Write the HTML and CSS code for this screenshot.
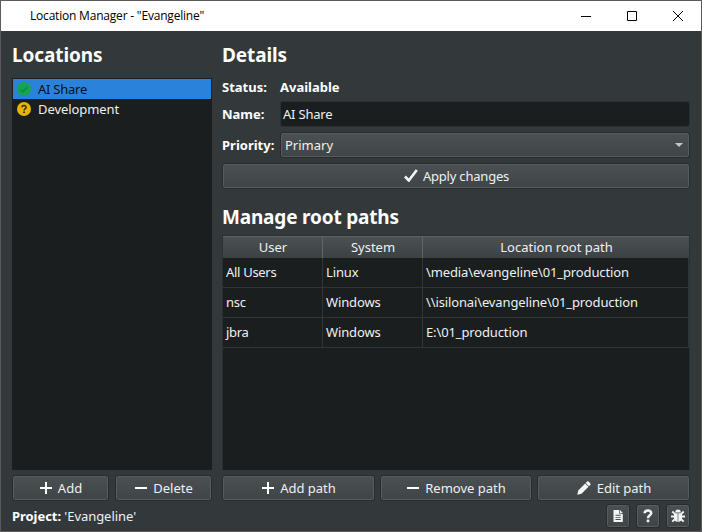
FILE: index.html
```html
<!DOCTYPE html>
<html lang="en">
<head>
<meta charset="utf-8">
<title>Location Manager</title>
<link rel="stylesheet" href="styles.css">
</head>
<body>
<div class="window">
  <header class="titlebar">
    <span class="title">Location Manager - "Evangeline"</span>
    <div class="controls">
      <svg viewBox="0 0 10 10"><path d="M0 5.5h10"/></svg>
      <svg viewBox="0 0 10 10"><path d="M.5.5h9v9h-9z"/></svg>
      <svg viewBox="0 0 10 10"><path d="M0 0l10 10M10 0L0 10"/></svg>
    </div>
  </header>
  <main class="content">
    <section class="locations">
      <h2>Locations</h2>
      <ul class="list">
        <li class="selected">
          <svg viewBox="0 0 14 14"><circle cx="7" cy="7" r="7" fill="#14a552"/><path d="M3.6 7.4l2.3 2.3 4.4-4.6" fill="none" stroke="#118a45" stroke-width="1.6"/></svg>
          <span>AI Share</span>
        </li>
        <li>
          <svg viewBox="0 0 14 14"><circle cx="7" cy="7" r="7" fill="#e6b400"/><path d="M5 5.3C5.100 2.800 9.200 2.900 9.100 5.400 9.100 6.800 7.100 6.700 7.100 8.400" fill="none" stroke="#2b2713" stroke-width="1.500"/><path d="M6.200 9.400h1.700v1.600H6.200z" fill="#2b2713"/></svg>
          <span>Development</span>
        </li>
      </ul>
      <div class="buttons">
        <button><svg class="icon" viewBox="0 0 12 12"><path d="M6 0v12M0 6h12"/></svg><span>Add</span></button>
        <button><svg class="icon" viewBox="0 0 12 12"><path d="M0 6h12"/></svg><span>Delete</span></button>
      </div>
    </section>
    <section class="details">
      <h2>Details</h2>
      <div class="form">
        <b class="status">Status:</b><b class="status">Available</b>
        <b>Name:</b><div class="input">AI Share</div>
        <b>Priority:</b><div class="select"><span>Primary</span><i class="arrow"></i></div>
      </div>
      <button class="apply"><svg class="check" viewBox="0 0 14 13"><path d="M1 7.500l3.800 4L12.800 1"/></svg><span>Apply changes</span></button>
      <h2 class="manage">Manage root paths</h2>
      <div class="table">
        <div class="row head"><span>User</span><span>System</span><span>Location root path</span></div>
        <div class="row"><span>All Users</span><span>Linux</span><span>\media\evangeline\01_production</span></div>
        <div class="row"><span>nsc</span><span>Windows</span><span>\\isilonai\evangeline\01_production</span></div>
        <div class="row"><span>jbra</span><span>Windows</span><span>E:\01_production</span></div>
      </div>
      <div class="buttons paths">
        <button><svg class="icon" viewBox="0 0 12 12"><path d="M6 0v12M0 6h12"/></svg><span>Add path</span></button>
        <button><svg class="icon" viewBox="0 0 12 12"><path d="M0 6h12"/></svg><span>Remove path</span></button>
        <button><svg class="pencil" viewBox="0 0 14 14"><path d="M.3 13.700l.9-4.200 7-7 3.300 3.300-7 7zM8.700 2L10.200.6q.7-.6 1.400 0l1.800 1.800q.6.7 0 1.400L12 5.300z"/></svg><span>Edit path</span></button>
      </div>
    </section>
  </main>
  <footer class="statusbar">
    <p><b>Project:</b> 'Evangeline'</p>
    <div class="tools">
      <button><svg viewBox="0 0 14 14"><path fill-rule="evenodd" d="M2.500 1h5.800v3.700h3.500V13H2.500zM9 1l2.800 2.900H9zM4.500 5.800v.9h5.200v-.9zM4.500 7.900v.9h5.200v-.9zM4.500 10v.9h5.200V10z"/></svg></button>
      <button><svg viewBox="0 0 14 14"><path d="M3.600 4.300C3.800.4 10.400.6 10.200 4.200 10.100 6.400 7 6.300 7 9.200" fill="none" stroke="#f4f4f4" stroke-width="2.500"/><path d="M5.700 10.600h2.600v2.600H5.700z"/></svg></button>
      <button><svg viewBox="0 0 14 14"><path d="M4.200 3.500a2.800 3 0 0 1 5.600 0zM3 4.200h3.700v8.800Q3 12.600 3 9zM7.300 4.200H11V9q0 3.600-3.700 4z"/><path d="M1.300 2.500L4 5.200M12.700 2.500L10 5.200M0 7.500h3.500M14 7.500h-3.500M1.300 12.600L4 10M12.700 12.600L10 10" stroke="#f4f4f4" stroke-width="1.800"/></svg></button>
    </div>
  </footer>
</div>
</body>
</html>
```
FILE: styles.css
```css
* { box-sizing: border-box; }

body {
  margin: 0;
  font: 13px/18px "Noto Sans", sans-serif;
  color: #eff0f1;
}

.window {
  width: 702px;
  height: 532px;
  border: 1px solid #5b5a5c;
  background: #33393b;
  display: flex;
  flex-direction: column;
}

.titlebar {
  height: 30px;
  padding: 0 18px 0 29px;
  display: flex;
  justify-content: space-between;
  align-items: center;
  background: #fff;
  color: #000;
}

.title { font: 12px/28px "Open Sans", sans-serif; letter-spacing: -0.2px; }
.controls { display: flex; gap: 36px; }
.controls svg { width: 10px; height: 10px; fill: none; stroke: #000; overflow: visible; }

.content {
  height: 470px;
  padding: 0 11px;
  display: grid;
  grid-template-columns: 200px 468px;
  column-gap: 10px;
}

.locations, .details { display: flex; flex-direction: column; }

h2 {
  height: 47px;
  margin: 0;
  padding-top: 11px;
  font-size: 19px;
  line-height: 26px;
  font-weight: 700;
  letter-spacing: -0.1px;
  color: #fff;
  white-space: nowrap;
}

.details .manage { letter-spacing: -0.18px; }

b { color: #fff; }

.list {
  height: 392px;
  margin: 0;
  padding: 1px;
  list-style: none;
  background: #1a1e1f;
  letter-spacing: -0.08px;
}

.list li { height: 20px; padding-left: 4px; display: flex; align-items: center; gap: 7px; }
.list svg { width: 14px; height: 14px; }
.list .selected { background: #2a82da; color: #03101f; letter-spacing: -0.25px; }

.buttons { display: grid; grid-auto-flow: column; grid-auto-columns: 1fr; gap: 6px; margin-top: 5px; }

button {
  height: 26px;
  padding: 0 0 1px;
  font: inherit;
  color: inherit;
  display: flex;
  align-items: center;
  justify-content: center;
  gap: 6px;
  background: linear-gradient(#4b5153, #3f4547);
  border: 1px solid #272c2e;
  border-radius: 3px;
  box-shadow: inset 0 0 0 1px #575d5f;
}

.buttons button { padding-left: 1px; }
.buttons.paths { grid-template-columns: 153px 152px 153px; gap: 5px; }

.icon { width: 12px; height: 12px; fill: none; stroke: #fff; stroke-width: 2; }
.check { width: 14px; height: 13px; fill: none; stroke: #f4f4f4; stroke-width: 2.6; }
.pencil { width: 14px; height: 14px; fill: #f4f4f4; }

.details h2 { height: 44px; }

.form {
  display: grid;
  grid-template-columns: 58px 410px;
  grid-template-rows: 24px 29px 33px;
  align-items: center;
}

.status { padding-bottom: 1px; }
.input { height: 26px; padding: 4px 2px; background: #1a1e1f; border: 1px solid #2b3032; border-radius: 3px; line-height: 16px; letter-spacing: -0.2px; }
.select {
  height: 26px;
  padding: 1px 6px 0 4px;
  display: flex;
  align-items: center;
  justify-content: space-between;
  background: linear-gradient(#4b5153, #3f4547);
  border: 1px solid #272c2e;
  border-radius: 3px;
  box-shadow: inset 0 0 0 1px #575d5f;
}
.arrow { border: 4px solid transparent; border-top-color: #c4c6c7; border-bottom: 0; }
.apply { margin-top: 2px; padding-left: 1px; gap: 5px; letter-spacing: -0.2px; }

.details .manage { height: 46px; padding-top: 15px; }

.table { height: 235px; background: #1a1e1f; border: 1px solid #2b3032; border-bottom: 0; }
.row { height: 30px; display: grid; grid-template-columns: 100px 100px 1fr; border-bottom: 1px solid #303638; letter-spacing: -0.13px; }
.row span { padding-left: 3px; line-height: 29px; border-right: 1px solid #303638; white-space: nowrap; }
.row span:first-child { letter-spacing: -0.3px; }
.head { height: 22px; background: linear-gradient(#4b5153, #3c4244); border-top: 1px solid #5d6365; border-bottom: 0; text-align: center; }
.row.head span { padding: 0 0 0 1px; line-height: 21px; border-color: #606668; letter-spacing: 0; }
.row.head span:last-child { border: 0; }

.statusbar { height: 30px; padding: 2px 11px 0; display: flex; justify-content: space-between; }
.statusbar p { margin: 4px 0 0; letter-spacing: -0.05px; }
.tools { display: flex; gap: 6px; margin-top: 1px; }
.tools button { width: 24px; height: 24px; padding: 0; }
.tools svg { width: 14px; height: 14px; fill: #f4f4f4; }
```
